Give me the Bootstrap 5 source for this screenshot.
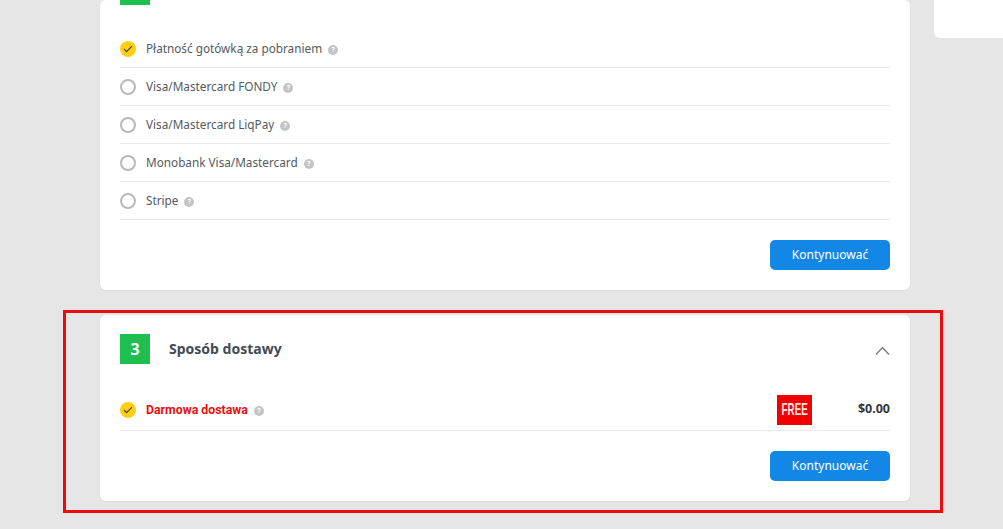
<!DOCTYPE html>
<html lang="pl">
<head>
<meta charset="utf-8">
<title>Checkout</title>
<link href="https://cdn.jsdelivr.net/npm/bootstrap@5.3.0/dist/css/bootstrap.min.css" rel="stylesheet">
<style>
html,body{height:529px;overflow:hidden}
body{background:#e6e6e6;font-family:"Noto Sans",Roboto,sans-serif;color:#555a61}
.page-clip{height:529px;overflow:hidden}
.main-col{width:810px;margin-left:100px}
.side-box{width:69px;height:38px;margin-left:24px;background:#fff;border-radius:0 0 0 6px}
.step-card{background:#fff;border-radius:6px;padding:0 20px;box-shadow:0 1px 2px rgba(0,0,0,.05)}
.step-first{height:290px}
.step-num{width:30px;height:30px;background:#1fbf4f;color:#fff;font-weight:700;font-size:16px;line-height:30px;text-align:center}
.stub{height:5px;width:30px;background:#1fbf4f}
.pay-list{margin-top:25px}
.pay-row{height:38px;border-bottom:1px solid #e9e9e9;font-size:11.75px;gap:10px}
.radio-off{width:16px;height:16px;border-radius:50%;border:2px solid #b9b9b9;flex:none}
.radio-on{width:16px;height:16px;border-radius:50%;background:#ffd012;flex:none}
.hint{display:inline-block;width:10px;height:10px;border-radius:50%;background:#c4c4c4;color:#fff;font-size:7px;line-height:10px;text-align:center;font-weight:700;margin-left:6px;vertical-align:1px}
.go-btn{width:120px;height:30px;padding:0;background:#1387e5;border:0;border-radius:5px;color:#fff;font-size:12px;line-height:30px}
.go-btn:hover{background:#1387e5;color:#fff}
.btn-row{margin-top:20px}
.frame-box{border:3px solid #ee0b0b;margin:20px -33px 0 -37px;padding:2px 30px 9px 34px}
.ship-card{height:186px}
.ship-head{padding-top:19px;height:71px}
.ship-title{font-size:14px;font-weight:700;margin-left:19px;color:#444a53;height:28px}
.chev{margin-top:5px}
.ship-row{height:45px;padding-top:4px;border-bottom:1px solid #e9e9e9;font-size:12.3px;gap:10px}
.ship-name{color:#e80e0e;font-weight:700;font-family:Roboto,sans-serif}
.free-tag{width:35px;height:30px;background:#f10000;color:#ffe2e2;font-family:"Liberation Sans",sans-serif;font-weight:700;font-size:17px;line-height:30px;text-align:center;overflow:hidden}
.free-text{display:inline-block;transform:scaleX(.58);transform-origin:center;white-space:nowrap;margin:0 -10px}
.price{font-weight:700;width:68px;text-align:right;color:#33373d;font-size:12.5px;margin-top:-1px}
</style>
</head>
<body>
<div class="page-clip d-flex align-items-start">
  <div class="main-col">
    <section class="step-card step-first">
      <div class="stub"></div>
      <div class="pay-list">
        <div class="pay-row d-flex align-items-center">
          <span class="radio-on d-flex align-items-center justify-content-center"><svg width="10" height="8" viewBox="0 0 10 8"><path d="M1 4l2.6 2.6L9 1.2" fill="none" stroke="#444" stroke-width="1.2"/></svg></span>
          <span>Płatność gotówką za pobraniem<span class="hint">?</span></span>
        </div>
        <div class="pay-row d-flex align-items-center"><span class="radio-off"></span><span>Visa/Mastercard FONDY<span class="hint">?</span></span></div>
        <div class="pay-row d-flex align-items-center"><span class="radio-off"></span><span>Visa/Mastercard LiqPay<span class="hint">?</span></span></div>
        <div class="pay-row d-flex align-items-center"><span class="radio-off"></span><span>Monobank Visa/Mastercard<span class="hint">?</span></span></div>
        <div class="pay-row d-flex align-items-center"><span class="radio-off"></span><span>Stripe<span class="hint">?</span></span></div>
      </div>
      <div class="btn-row d-flex justify-content-end"><button class="btn go-btn" type="button">Kontynuować</button></div>
    </section>
    <div class="frame-box">
      <section class="step-card ship-card">
        <div class="ship-head d-flex align-items-start">
          <div class="step-num">3</div>
          <div class="ship-title flex-grow-1 d-flex align-items-center">Sposób dostawy</div>
          <svg class="chev" width="16" height="22" viewBox="0 0 16 22"><path d="M2 15.5l6.5-7 6.5 7" fill="none" stroke="#7c7c7c" stroke-width="1.4"/></svg>
        </div>
        <div class="ship-row d-flex align-items-center">
          <span class="radio-on d-flex align-items-center justify-content-center"><svg width="10" height="8" viewBox="0 0 10 8"><path d="M1 4l2.6 2.6L9 1.2" fill="none" stroke="#444" stroke-width="1.2"/></svg></span>
          <span class="ship-name flex-grow-1">Darmowa dostawa<span class="hint">?</span></span>
          <span class="free-tag"><span class="free-text">FREE</span></span>
          <span class="price">$0.00</span>
        </div>
        <div class="btn-row d-flex justify-content-end"><button class="btn go-btn" type="button">Kontynuować</button></div>
      </section>
    </div>
  </div>
  <aside class="side-box"></aside>
</div>
<script src="https://cdn.jsdelivr.net/npm/bootstrap@5.3.0/dist/js/bootstrap.bundle.min.js"></script>
</body>
</html>
